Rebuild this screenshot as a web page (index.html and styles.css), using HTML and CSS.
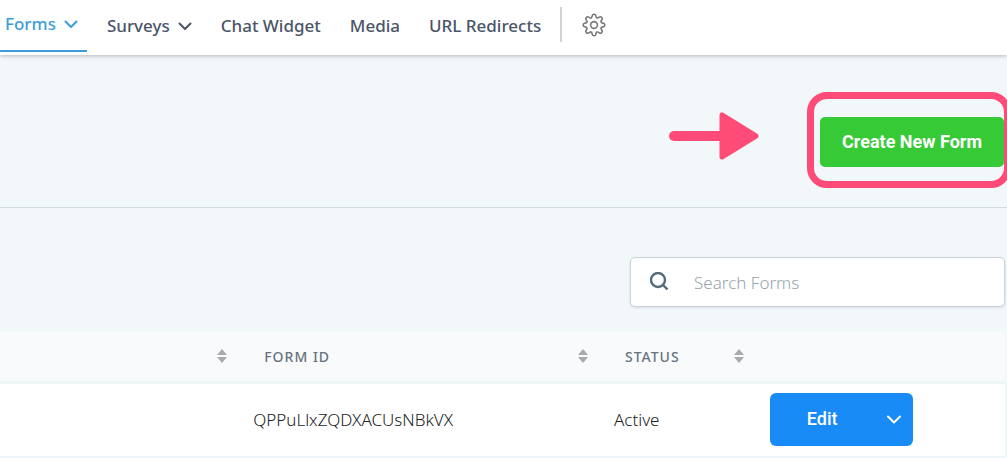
FILE: index.html
```html
<!DOCTYPE html>
<html lang="en">

<head>
    <meta charset="UTF-8">
    <meta name="viewport" content="width=device-width, initial-scale=1.0">
    <title>Forms</title>
    <link rel="stylesheet" href="styles.css">
</head>

<body>
    <header class="topbar">
        <nav class="nav">
            <a href="#" class="nav-link active">Forms
                <svg class="chevron" viewBox="0 0 14 9"><path d="M1.5 1.5 7 7l5.5-5.5" /></svg>
            </a>
            <a href="#" class="nav-link">Surveys
                <svg class="chevron" viewBox="0 0 14 9"><path d="M1.5 1.5 7 7l5.5-5.5" /></svg>
            </a>
            <a href="#" class="nav-link">Chat Widget</a>
            <a href="#" class="nav-link">Media</a>
            <a href="#" class="nav-link">URL Redirects</a>
        </nav>
        <a href="#" class="settings" aria-label="Settings">
            <svg viewBox="0 0 24 24">
                <circle cx="12" cy="12" r="3.4" />
                <path d="M10.2 2.7c.4-2 3.2-2 3.6 0l.3 1.2c.2 1 1.3 1.4 2.1.9l1.1-.7c1.7-1.1 3.7.9 2.6 2.6l-.7 1.1c-.5.8-.1 1.9.9 2.1l1.2.3c2 .4 2 3.2 0 3.6l-1.2.3c-1 .2-1.4 1.3-.9 2.1l.7 1.1c1.1 1.7-.9 3.7-2.6 2.6l-1.1-.7c-.8-.5-1.9-.1-2.1.9l-.3 1.2c-.4 2-3.2 2-3.6 0l-.3-1.2c-.2-1-1.3-1.4-2.1-.9l-1.1.7c-1.7 1.1-3.7-.9-2.6-2.6l.7-1.1c.5-.8.1-1.9-.9-2.1l-1.2-.3c-2-.4-2-3.2 0-3.6l1.2-.3c1-.2 1.4-1.3.9-2.1l-.7-1.1C3 5 5 3 6.7 4.1l1.1.7c.8.5 1.9.1 2.1-.9z" />
            </svg>
        </a>
    </header>

    <main>
        <section class="actions">
            <svg class="arrow" viewBox="0 0 90 48">
                <path class="arrow-line" d="M5 24h48" />
                <path class="arrow-head" d="M53 3v42l34-21z" />
            </svg>
            <div class="highlight">
                <button type="button" class="create-btn">Create New Form</button>
            </div>
        </section>

        <section class="search-row">
            <label class="search">
                <svg class="search-icon" viewBox="0 0 20 20">
                    <circle cx="9" cy="8" r="7" />
                    <path d="m14 13 4.5 4.5" />
                </svg>
                <input type="text" placeholder="Search Forms" aria-label="Search Forms">
            </label>
        </section>

        <table class="forms-table">
            <thead>
                <tr>
                    <th class="col-name">
                        <div class="th-inner">
                            <span></span>
                            <svg class="sort" viewBox="0 0 10 14"><path d="M5 0l5 6H0zM0 8h10l-5 6z" /></svg>
                        </div>
                    </th>
                    <th class="col-id">
                        <div class="th-inner">
                            <span>FORM ID</span>
                            <svg class="sort" viewBox="0 0 10 14"><path d="M5 0l5 6H0zM0 8h10l-5 6z" /></svg>
                        </div>
                    </th>
                    <th class="col-status">
                        <div class="th-inner">
                            <span>STATUS</span>
                            <svg class="sort" viewBox="0 0 10 14"><path d="M5 0l5 6H0zM0 8h10l-5 6z" /></svg>
                        </div>
                    </th>
                    <th></th>
                </tr>
            </thead>
            <tbody>
                <tr>
                    <td></td>
                    <td>QPPuLlxZQDXACUsNBkVX</td>
                    <td>Active</td>
                    <td>
                        <div class="btn-group">
                            <button type="button" class="edit-btn">Edit</button>
                            <button type="button" class="more-btn" aria-label="More actions">
                                <svg class="chevron" viewBox="0 0 14 9"><path d="M1 1.5l6 6 6-6" /></svg>
                            </button>
                        </div>
                    </td>
                </tr>
            </tbody>
        </table>
    </main>
</body>

</html>
```

FILE: styles.css
```css
* {
    margin: 0;
    padding: 0;
    box-sizing: border-box;
}

body {
    font-family: "Segoe UI", "Noto Sans", sans-serif;
    font-size: 17px;
    color: #222;
    background-color: #f2f7fa;
    overflow-x: hidden;
}

svg {
    display: block;
    flex-shrink: 0;
}

/* Top navigation */
.topbar {
    display: flex;
    align-items: flex-start;
    height: 55px;
    background-color: #fff;
    box-shadow: 0 1px 4px rgba(0, 0, 0, 0.25);
}

.nav {
    display: flex;
    gap: 29px;
    padding-right: 19px;
}

.nav-link {
    display: flex;
    align-items: center;
    gap: 8px;
    height: 52px;
    line-height: 24px;
    font-weight: 500;
    color: #4a5568;
    text-decoration: none;
    white-space: nowrap;
}

.nav-link.active {
    padding: 0 9px 2px 5px;
    margin-right: -9px;
    color: #3b9edb;
    border-bottom: 2px solid #3b9edb;
}

.chevron {
    width: 14px;
    height: 9px;
    fill: none;
    stroke: currentColor;
    stroke-width: 2;
    stroke-linecap: round;
    stroke-linejoin: round;
}

.settings {
    display: flex;
    align-items: center;
    height: 35px;
    margin-top: 7px;
    padding-left: 20px;
    border-left: 2px solid #cfd3d8;
    color: #777;
}

.settings svg {
    width: 24px;
    height: 24px;
    fill: none;
    stroke: currentColor;
    stroke-width: 1.6;
}

/* Create form */
.actions {
    display: flex;
    align-items: center;
    justify-content: flex-end;
    gap: 48px;
    height: 153px;
    padding-top: 18px;
    border-bottom: 1px solid #d3dade;
    overflow: hidden;
}

.arrow {
    width: 90px;
    height: 48px;
    margin-top: -8px;
    stroke: #ff4b77;
    stroke-linecap: round;
    stroke-linejoin: round;
}

.arrow-line {
    stroke-width: 10;
}

.arrow-head {
    fill: #ff4b77;
    stroke-width: 5;
}

.highlight {
    height: 96px;
    margin-right: -4px;
    padding: 18px 0 0 6px;
    border: 7px solid #ff4b77;
    border-radius: 20px;
}

.create-btn {
    height: 50px;
    padding: 0 22px 2px;
    border: none;
    border-radius: 5px;
    background-color: #37ca37;
    color: #fff;
    font-family: Roboto, sans-serif;
    font-size: 18px;
    font-weight: 700;
    white-space: nowrap;
    cursor: pointer;
}

/* Search */
.search-row {
    display: flex;
    justify-content: flex-end;
    padding: 49px 2px 25px;
}

.search {
    display: flex;
    align-items: center;
    gap: 25px;
    width: 375px;
    height: 50px;
    padding: 0 18px;
    border: 1px solid #cbd2dc;
    border-radius: 5px;
    background-color: #fff;
    box-shadow: 0 1px 3px rgba(0, 0, 0, 0.1);
}

.search-icon {
    width: 20px;
    height: 20px;
    fill: none;
    stroke: #546b7a;
    stroke-width: 2.4;
}

.search input {
    flex: 1;
    min-width: 0;
    border: none;
    outline: none;
    font: inherit;
    font-weight: 300;
}

.search input::placeholder {
    color: #98a4ac;
}

/* Forms table */
.forms-table {
    width: calc(100% - 2px);
    border-collapse: collapse;
    table-layout: fixed;
}

.forms-table tr {
    background-color: #fff;
    border-bottom: 2px solid #eff6f8;
}

.forms-table thead tr {
    background-color: #f9fafc;
    border-bottom-width: 3px;
}

.forms-table th {
    height: 50px;
    padding: 0 12px 0 25px;
    color: #68737d;
    font-size: 14px;
    font-weight: 500;
    letter-spacing: 1px;
    text-align: left;
}

.forms-table td {
    height: 75px;
    padding: 0 14px;
    font-weight: 300;
}

.col-name {
    width: 23.8%;
}

.col-id {
    width: 35.9%;
}

.col-status {
    width: 15.5%;
}

.th-inner {
    display: flex;
    align-items: center;
    justify-content: space-between;
}

.sort {
    width: 10px;
    height: 14px;
    fill: #aaa;
}

.btn-group {
    display: flex;
    width: 143px;
    height: 53px;
    border-radius: 6px;
    background-color: #188bf6;
    overflow: hidden;
}

.btn-group button {
    border: none;
    background: none;
    color: #fff;
    font-family: Roboto, sans-serif;
    font-size: 18px;
    font-weight: 500;
    cursor: pointer;
}

.btn-group .edit-btn {
    flex: 1;
    padding-bottom: 2px;
}

.more-btn {
    padding: 0 12px;
}
```
